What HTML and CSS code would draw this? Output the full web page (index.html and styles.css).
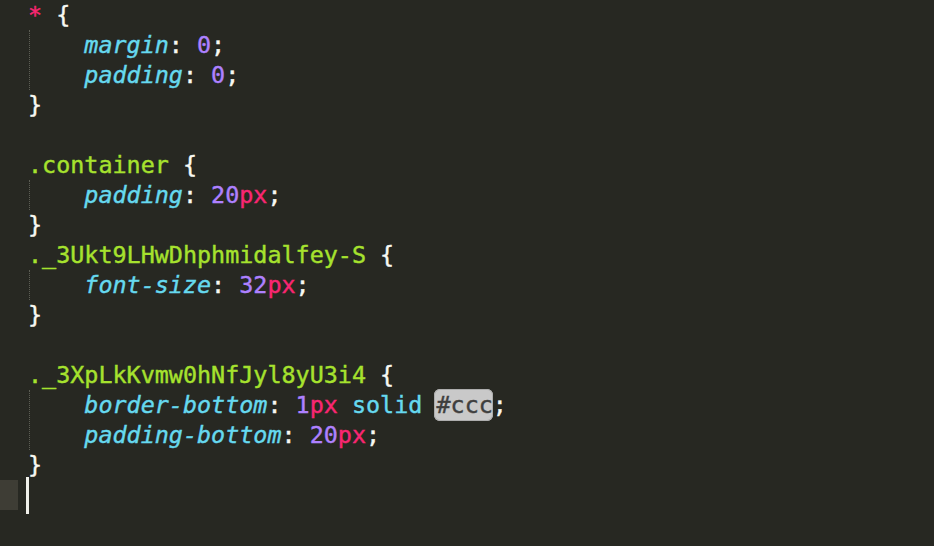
FILE: index.html
```html
<!DOCTYPE html>
<html>
<head>
<meta charset="utf-8">
<link rel="stylesheet" href="styles.css">
</head>
<body>
<div class="editor">
  <div class="line"><span class="tag">*</span> <span class="p">{</span></div>
  <div class="body">
    <div class="line"><span class="prop">margin</span><span class="p">:</span> <span class="num">0</span><span class="p">;</span></div>
    <div class="line"><span class="prop">padding</span><span class="p">:</span> <span class="num">0</span><span class="p">;</span></div>
  </div>
  <div class="line"><span class="p">}</span></div>
  <div class="line"></div>
  <div class="line"><span class="sel">.container</span> <span class="p">{</span></div>
  <div class="body">
    <div class="line"><span class="prop">padding</span><span class="p">:</span> <span class="num">20</span><span class="unit">px</span><span class="p">;</span></div>
  </div>
  <div class="line"><span class="p">}</span></div>
  <div class="line"><span class="sel">._3Ukt9LHwDhphmidalfey-S</span> <span class="p">{</span></div>
  <div class="body">
    <div class="line"><span class="prop">font-size</span><span class="p">:</span> <span class="num">32</span><span class="unit">px</span><span class="p">;</span></div>
  </div>
  <div class="line"><span class="p">}</span></div>
  <div class="line"></div>
  <div class="line"><span class="sel">._3XpLkKvmw0hNfJyl8yU3i4</span> <span class="p">{</span></div>
  <div class="body">
    <div class="line"><span class="prop">border-bottom</span><span class="p">:</span> <span class="num">1</span><span class="unit">px</span> <span class="kw">solid</span> <span class="color">#ccc</span><span class="p">;</span></div>
    <div class="line"><span class="prop">padding-bottom</span><span class="p">:</span> <span class="num">20</span><span class="unit">px</span><span class="p">;</span></div>
  </div>
  <div class="line"><span class="p">}</span></div>
  <div class="cursor-line">
    <span class="gutter-mark"></span>
    <span class="cursor"></span>
  </div>
</div>
</body>
</html>
```

FILE: styles.css
```css
html, body {
  margin: 0;
  padding: 0;
  background: #272822;
  height: 100%;
}

.editor {
  font-family: "DejaVu Sans Mono", "Liberation Mono", monospace;
  font-size: 23.4px;
  color: #f8f8f2;
  padding-left: 28px;
}

.line {
  height: 30px;
  line-height: 30px;
  white-space: pre;
  -webkit-text-stroke: 0.4px currentColor;
}

.body {
  margin-left: 1px;
  border-left: 1px dotted #5d5e55;
  padding-left: calc(4ch - 2px);
}

.tag { color: #f92672; }
.p { color: #f8f8f2; }
.sel { color: #a6e22e; }
.prop { color: #66d9ef; font-style: italic; }
.kw { color: #66d9ef; }
.num { color: #ae81ff; }
.unit { color: #f92672; }

.color {
  background: #c9c9c9;
  color: #3e3e3e;
  border-radius: 6px;
  padding: 2px 0;
  margin-left: -2px;
  padding-left: 2px;
  box-shadow: inset 0 0 0 1px #adadad;
}

.cursor-line {
  display: flex;
  align-items: center;
  height: 30px;
  margin-left: -28px;
}

.gutter-mark {
  width: 18px;
  height: 30px;
  background: #3e3d35;
}

.cursor {
  margin-left: 8px;
  width: 3px;
  height: 37px;
  background: #f0f0ea;
}
```
